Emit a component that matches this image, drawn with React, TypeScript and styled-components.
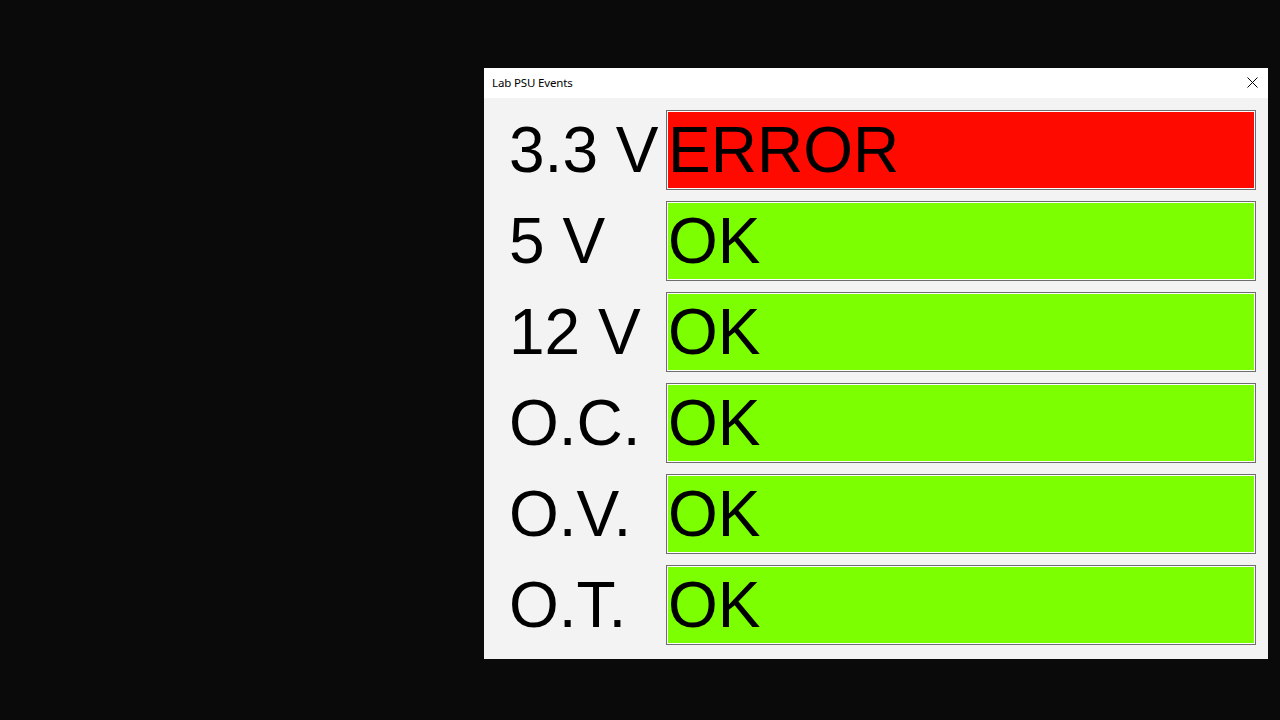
import React from "react";
import styled, { createGlobalStyle } from "styled-components";

const GlobalStyle = createGlobalStyle`
  html, body {
    margin: 0;
    padding: 0;
    background: #0a0a0a;
    width: 1280px;
    height: 720px;
    overflow: hidden;
  }
`;

const Desktop = styled.div`
  width: 1280px;
  height: 720px;
  padding: 68px 0 0 484px;
  box-sizing: border-box;
  background: #0a0a0a;
`;

const Window = styled.div`
  width: 784px;
  height: 591px;
  display: flex;
  flex-direction: column;
  background: #f3f3f3;
`;

const TitleBar = styled.div`
  height: 30px;
  flex: none;
  background: #ffffff;
  display: flex;
  align-items: center;
  justify-content: space-between;
  padding: 0 10px 1px 8px;
  box-sizing: border-box;
`;

const Title = styled.span`
  font-family: "Noto Sans", "DejaVu Sans", sans-serif;
  font-size: 11.5px;
  color: #000;
  letter-spacing: -0.15px;
`;

const CloseButton = styled.div`
  width: 12px;
  height: 12px;
  display: flex;
  align-items: center;
  justify-content: center;
`;

const Body = styled.div`
  flex: 1;
  display: grid;
  grid-template-columns: 157px 1fr;
  grid-auto-rows: 80px;
  row-gap: 11px;
  padding: 12px 12px 0 25px;
  box-sizing: border-box;
`;

const Label = styled.div`
  font-family: "Liberation Sans", Arial, sans-serif;
  font-size: 64px;
  line-height: 72px;
  padding-top: 4px;
  color: #000;
  white-space: nowrap;
  box-sizing: border-box;
`;

const Status = styled.div<{ $error?: boolean }>`
  font-family: "Liberation Sans", Arial, sans-serif;
  font-size: 64px;
  line-height: 72px;
  padding: 3px 0 0 1px;
  color: #000;
  background: ${(p) => (p.$error ? "#ff0a00" : "#7cff00")};
  border: 1px solid #6d6d6d;
  box-shadow: inset 0 0 0 1px #ffffff;
  box-sizing: border-box;
  overflow: hidden;
  white-space: nowrap;
`;

const rows = [
  { label: "3.3 V", status: "ERROR", error: true },
  { label: "5 V", status: "OK", error: false },
  { label: "12 V", status: "OK", error: false },
  { label: "O.C.", status: "OK", error: false },
  { label: "O.V.", status: "OK", error: false },
  { label: "O.T.", status: "OK", error: false },
];

export default function App() {
  return (
    <>
      <GlobalStyle />
      <Desktop>
        <Window>
          <TitleBar>
            <Title>Lab PSU Events</Title>
            <CloseButton>
              <svg width="11" height="11" viewBox="0 0 11 11">
                <path d="M0.5 0.5 L10.5 10.5 M10.5 0.5 L0.5 10.5" stroke="#000" strokeWidth="1" fill="none" />
              </svg>
            </CloseButton>
          </TitleBar>
          <Body>
            {rows.map((r) => (
              <React.Fragment key={r.label}>
                <Label>{r.label}</Label>
                <Status $error={r.error}>{r.status}</Status>
              </React.Fragment>
            ))}
          </Body>
        </Window>
      </Desktop>
    </>
  );
}
